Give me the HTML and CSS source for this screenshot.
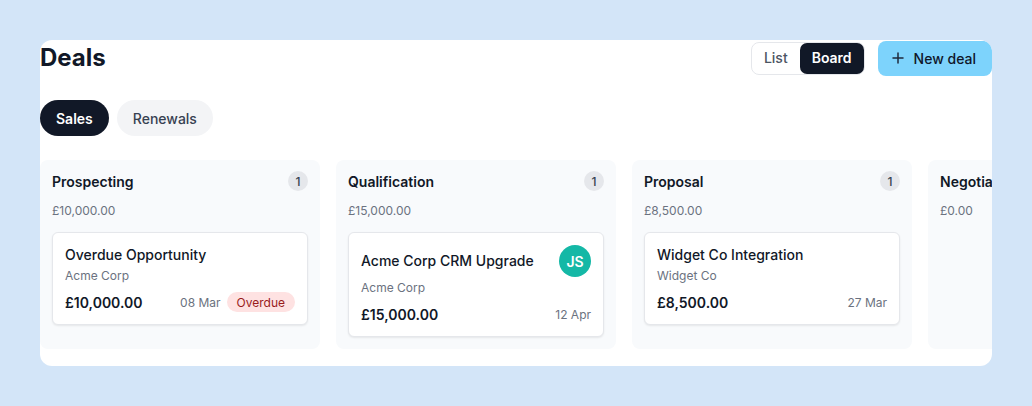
FILE: index.html
```html
<!DOCTYPE html>
<html lang="en">
<head>
<meta charset="utf-8">
<title>Deals</title>
<link rel="stylesheet" href="styles.css">
</head>
<body>
<main class="panel">
  <header class="page-header">
    <h1 class="title">Deals</h1>
    <div class="actions">
      <div class="toggle">
        <button class="toggle-btn">List</button>
        <button class="toggle-btn active">Board</button>
      </div>
      <button class="primary-btn">
        <svg class="plus" width="16" height="16" viewBox="0 0 16 16" fill="none" stroke="currentColor" stroke-width="1.5" stroke-linecap="round"><path d="M8 3v10M3 8h10"/></svg>
        New deal
      </button>
    </div>
  </header>

  <nav class="tabs">
    <button class="tab active">Sales</button>
    <button class="tab">Renewals</button>
  </nav>

  <section class="board">
    <div class="column">
      <div class="col-head">
        <span class="col-title">Prospecting</span>
        <span class="count">1</span>
      </div>
      <div class="col-total">£10,000.00</div>
      <div class="card">
        <div class="card-title">Overdue Opportunity</div>
        <div class="card-company">Acme Corp</div>
        <div class="card-foot">
          <span class="card-amount">£10,000.00</span>
          <span class="card-meta"><span class="card-date">08 Mar</span><span class="overdue">Overdue</span></span>
        </div>
      </div>
    </div>

    <div class="column">
      <div class="col-head">
        <span class="col-title">Qualification</span>
        <span class="count">1</span>
      </div>
      <div class="col-total">£15,000.00</div>
      <div class="card">
        <div class="card-top">
          <div class="card-title">Acme Corp CRM Upgrade</div>
          <span class="avatar">JS</span>
        </div>
        <div class="card-company">Acme Corp</div>
        <div class="card-foot">
          <span class="card-amount">£15,000.00</span>
          <span class="card-date">12 Apr</span>
        </div>
      </div>
    </div>

    <div class="column">
      <div class="col-head">
        <span class="col-title">Proposal</span>
        <span class="count">1</span>
      </div>
      <div class="col-total">£8,500.00</div>
      <div class="card">
        <div class="card-title">Widget Co Integration</div>
        <div class="card-company">Widget Co</div>
        <div class="card-foot">
          <span class="card-amount">£8,500.00</span>
          <span class="card-date">27 Mar</span>
        </div>
      </div>
    </div>

    <div class="column">
      <div class="col-head">
        <span class="col-title">Negotiation</span>
        <span class="count">0</span>
      </div>
      <div class="col-total">£0.00</div>
    </div>
  </section>
</main>
</body>
</html>
```

FILE: styles.css
```css
* { box-sizing: border-box; }

html, body { margin: 0; }

body {
  padding: 40px;
  background: #d3e5f8;
  font-family: Inter, "Noto Sans", sans-serif;
  color: #111827;
}

.panel {
  background: #ffffff;
  border-radius: 12px;
  overflow: hidden;
}

button {
  font-family: inherit;
  border: 0;
  cursor: pointer;
}

.page-header {
  display: flex;
  align-items: center;
  justify-content: space-between;
  height: 36px;
}

.title {
  margin: 0;
  font-size: 24px;
  line-height: 32px;
  font-weight: 700;
  color: #111827;
}

.actions {
  display: flex;
  align-items: center;
  gap: 13px;
}

.toggle {
  display: flex;
  border: 1px solid #e5e7eb;
  border-radius: 8px;
  height: 33px;
}

.toggle-btn {
  background: transparent;
  font-size: 14px;
  font-weight: 500;
  color: #4b5563;
  padding: 0 12px;
  border-radius: 7px;
  line-height: 20px;
}

.toggle-btn.active {
  background: #111827;
  color: #ffffff;
  font-weight: 600;
}

.primary-btn {
  display: flex;
  align-items: center;
  gap: 8px;
  height: 35px;
  padding: 0 16px 0 12px;
  border-radius: 8px;
  background: #7dd3fc;
  color: #0f172a;
  font-size: 14px;
  font-weight: 500;
}

.plus { color: #1e293b; }

.tabs {
  display: flex;
  gap: 8px;
  margin-top: 24px;
}

.tab {
  height: 36px;
  padding: 0 16px;
  border-radius: 999px;
  background: #f3f4f6;
  color: #374151;
  font-size: 14px;
  font-weight: 500;
}

.tab.active {
  background: #111827;
  color: #ffffff;
  font-weight: 600;
}

.board {
  display: flex;
  gap: 16px;
  margin-top: 24px;
  padding-bottom: 17px;
  overflow: hidden;
}

.column {
  flex: 0 0 280px;
  background: #f8fafc;
  border-radius: 8px;
  padding: 11px 12px 12px;
}

.col-head {
  display: flex;
  align-items: center;
  justify-content: space-between;
  height: 20px;
}

.col-title {
  font-size: 14px;
  font-weight: 600;
  color: #111827;
}

.count {
  width: 20px;
  height: 20px;
  border-radius: 50%;
  background: #e5e7eb;
  color: #374151;
  font-size: 12px;
  font-weight: 500;
  display: flex;
  align-items: center;
  justify-content: center;
}

.col-total {
  margin-top: 11px;
  font-size: 12px;
  line-height: 18px;
  color: #6b7280;
}

.card {
  margin-top: 12px;
  background: #ffffff;
  border: 1px solid #e5e7eb;
  border-radius: 6px;
  box-shadow: 0 1px 2px rgba(0, 0, 0, 0.08);
  padding: 12px;
}

.card-top {
  display: flex;
  align-items: center;
  justify-content: space-between;
}

.card-title {
  font-size: 14px;
  line-height: 20px;
  font-weight: 500;
  color: #111827;
}

.avatar {
  width: 32px;
  height: 32px;
  border-radius: 50%;
  background: #14b8a6;
  color: #ffffff;
  font-size: 14px;
  font-weight: 600;
  display: flex;
  align-items: center;
  justify-content: center;
}

.card-company {
  margin-top: 3px;
  font-size: 12px;
  line-height: 16px;
  color: #6b7280;
}

.card-foot {
  margin-top: 8px;
  display: flex;
  align-items: center;
  justify-content: space-between;
  height: 20px;
}

.card-amount {
  font-size: 14px;
  font-weight: 600;
  color: #111827;
}

.card-meta {
  display: flex;
  align-items: center;
  gap: 6px;
}

.card-date {
  font-size: 12px;
  color: #6b7280;
}

.overdue {
  height: 20px;
  padding: 0 10px;
  border-radius: 999px;
  background: #fee2e2;
  color: #991b1b;
  font-size: 12px;
  display: flex;
  align-items: center;
}
```
